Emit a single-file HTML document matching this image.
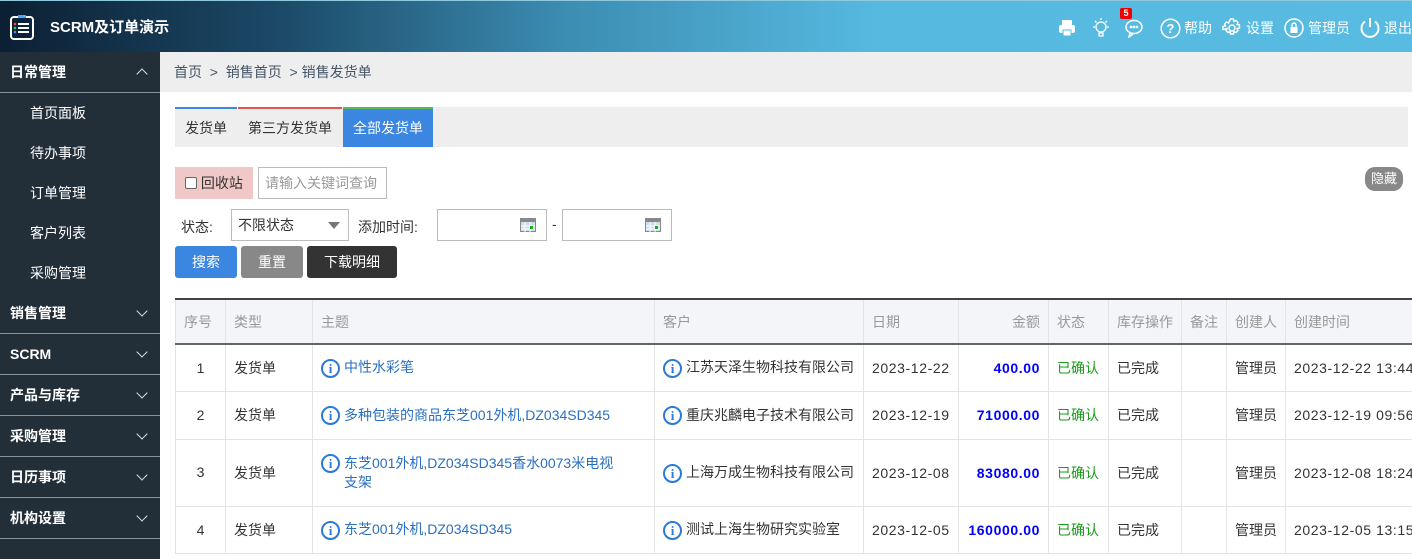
<!DOCTYPE html>
<html><head><meta charset="utf-8"><style>
*{box-sizing:border-box;margin:0;padding:0}
html,body{width:1412px;height:559px;overflow:hidden}
body{font-family:"Liberation Sans","Noto Sans CJK SC",sans-serif;font-size:14px;color:#333;background:#fff;position:relative}
.hd{position:absolute;left:0;top:0;width:1412px;height:52px;background:linear-gradient(90deg,#0c1f33 0%,#1c4a68 20%,#3c8db2 40%,#56b9e0 62%,#58bbe1 100%);border-top:1px solid #8fc9dd}
.hd .t{position:absolute;left:50px;top:15px;color:#fff;font-weight:bold;font-size:15px}
.hr{position:absolute;top:17px;color:#fff;font-size:14px}
.sb{position:absolute;left:0;top:52px;width:160px;height:507px;background:#232f38}
.sec{height:41px;border-bottom:1px solid #8a9399;color:#fff;font-weight:bold;font-size:14px;line-height:40px;padding-left:10px;position:relative}
.sec:after{content:"";position:absolute;right:14px;top:14px;width:7px;height:7px;border-right:1.5px solid #ddd;border-bottom:1.5px solid #ddd;transform:rotate(45deg)}
.sec.up:after{top:18px;transform:rotate(-135deg)}
.it{height:40px;line-height:40px;color:#fff;padding-left:30px;font-size:14px}
.bc{position:absolute;left:160px;top:52px;width:1252px;height:40px;background:#eee;color:#456;line-height:40px;padding-left:14px}
.tabs{position:absolute;left:175px;top:107px;width:1233px;height:40px;background:#eee}
.tab{position:absolute;top:0;height:40px;line-height:38px;text-align:center;border-top:2px solid}
.abs{position:absolute}
.btn{position:absolute;top:246px;height:32px;line-height:32px;color:#fff;text-align:center;border-radius:3px}
.wrap{position:absolute;left:0;top:0;width:1412px;height:559px;overflow:hidden}
table{position:absolute;left:175px;top:298px;border-collapse:collapse;table-layout:fixed;width:1250px;border-top:2px solid #444}
td,th{border:1px solid #e4e4e4;padding:0 8px;font-weight:normal;text-align:left;white-space:nowrap;overflow:hidden}
th{background:#f3f5f9;color:#999;height:45px;border-bottom:2px solid #666}
td{color:#333}
.n{letter-spacing:.6px}
.i{display:inline-block;width:19px;height:19px;border:2px solid #2a7ad8;border-radius:50%;color:#2a7ad8;font:bold 13px "Liberation Serif",serif;text-align:center;line-height:15px;vertical-align:middle;margin-right:4px}
.lk{color:#2a6fc0}
.am{text-align:right;color:#00f;font-weight:bold}
.ok{color:#1a9a1a}
</style></head><body><div class="wrap">
<div class="hd">
<svg class="abs" style="left:10px;top:13px" width="24" height="26" viewBox="0 0 24 26"><rect x="1" y="3" width="22" height="22" rx="3" fill="none" stroke="#fff" stroke-width="2"/><rect x="8" y="1" width="8" height="3" fill="#4af"/><circle cx="5" cy="10" r="1.3" fill="#f44"/><circle cx="5" cy="14" r="1.3" fill="#4c4"/><circle cx="5" cy="18" r="1.3" fill="#48f"/><path d="M8 10h11M8 14h11M8 18h11" stroke="#fff" stroke-width="2"/></svg>
<div class="t">SCRM及订单演示</div>
<svg class="abs" style="left:1058px;top:18px" width="18" height="18" viewBox="0 0 18 18"><rect x="4" y="1" width="10" height="5" fill="#fff"/><rect x="1" y="6" width="16" height="8" rx="2" fill="#fff"/><rect x="5" y="11" width="8" height="6" fill="#fff" stroke="#56b9e0"/></svg>
<svg class="abs" style="left:1091px;top:16px" width="20" height="22" viewBox="0 0 20 22" fill="none" stroke="#fff" stroke-width="1.3"><circle cx="10" cy="10" r="5"/><path d="M8 16h4v3h-4zM10 1v2M2 10h2M16 10h2M4 4l1.5 1.5M16 4l-1.5 1.5"/></svg>
<svg class="abs" style="left:1124px;top:17px" width="22" height="20" viewBox="0 0 22 20" fill="none" stroke="#fff" stroke-width="1.5"><ellipse cx="10" cy="9" rx="8" ry="6.5"/><path d="M6 15l-1 4 4-3"/><circle cx="7" cy="9" r=".6" fill="#fff"/><circle cx="10" cy="9" r=".6" fill="#fff"/><circle cx="13" cy="9" r=".6" fill="#fff"/></svg>
<div class="abs" style="left:1120px;top:7px;width:12px;height:11px;background:#e00;color:#fff;font-size:9px;font-weight:bold;text-align:center;line-height:11px;border-radius:2px">5</div>
<svg class="abs" style="left:1160px;top:17px" width="21" height="21" viewBox="0 0 21 21"><circle cx="10.5" cy="10.5" r="9.3" fill="none" stroke="#fff" stroke-width="1.5"/><text x="10.5" y="15" font-size="13" font-weight="bold" fill="#fff" text-anchor="middle" font-family="Liberation Sans">?</text></svg>
<div class="hr" style="left:1184px">帮助</div>
<svg class="abs" style="left:1222px;top:17px" width="20" height="20" viewBox="0 0 20 20" fill="none" stroke="#fff" stroke-width="1.4"><circle cx="10" cy="10" r="3"/><path d="M8.5 1h3l.5 2.5 2-1 2 2-1 2 2.5.5v3l-2.5.5 1 2-2 2-2-1-.5 2.5h-3l-.5-2.5-2 1-2-2 1-2L1 11.5v-3L3.5 8l-1-2 2-2 2 1z"/></svg>
<div class="hr" style="left:1246px">设置</div>
<svg class="abs" style="left:1284px;top:17px" width="20" height="20" viewBox="0 0 20 20"><circle cx="10" cy="10" r="9" fill="none" stroke="#fff" stroke-width="1.5"/><rect x="6.5" y="9" width="7" height="6" fill="#fff"/><path d="M8 9V7a2 2 0 014 0v2" fill="none" stroke="#fff" stroke-width="1.4"/></svg>
<div class="hr" style="left:1308px">管理员</div>
<svg class="abs" style="left:1359px;top:16px" width="22" height="22" viewBox="0 0 22 22" fill="none" stroke="#fff" stroke-width="2"><path d="M6 4.5A8.5 8.5 0 1016 4.5"/><path d="M11 1v9"/></svg>
<div class="hr" style="left:1384px">退出</div>
</div>
<div class="sb">
<div class="sec up">日常管理</div>
<div class="it">首页面板</div><div class="it">待办事项</div><div class="it">订单管理</div><div class="it">客户列表</div><div class="it">采购管理</div>
<div class="sec">销售管理</div><div class="sec">SCRM</div><div class="sec">产品与库存</div><div class="sec">采购管理</div><div class="sec">日历事项</div><div class="sec">机构设置</div>
</div>
<div class="bc">首页 &nbsp;&gt;&nbsp; 销售首页 &nbsp;&gt; 销售发货单</div>
<div class="tabs">
<div class="tab" style="left:0;width:62px;border-color:#3b86e0">发货单</div>
<div class="tab" style="left:63px;width:104px;border-color:#e0574f">第三方发货单</div>
<div class="tab" style="left:168px;width:90px;border-color:#5cb85c;background:#3b86e0;color:#fff">全部发货单</div>
</div>
<div class="abs" style="left:175px;top:167px;width:78px;height:32px;background:#f0c8c8;line-height:32px;padding-left:10px"><span style="display:inline-block;width:12px;height:12px;border:1px solid #666;border-radius:2px;background:#fff;vertical-align:-1px"></span> 回收站</div>
<div class="abs" style="left:258px;top:167px;width:129px;height:32px;border:1px solid #bbb;color:#999;line-height:30px;padding-left:6px">请输入关键词查询</div>
<div class="abs" style="left:1365px;top:167px;width:38px;height:24px;background:#888;color:#fff;border-radius:10px;text-align:center;line-height:24px;font-size:13px">隐藏</div>
<div class="abs" style="left:181px;top:217px">状态:</div>
<div class="abs" style="left:231px;top:209px;width:118px;height:32px;border:1px solid #bbb;line-height:30px;padding-left:6px">不限状态<span style="position:absolute;right:8px;top:12px;border:6px solid transparent;border-top:7px solid #777"></span></div>
<div class="abs" style="left:358px;top:217px">添加时间:</div>
<div class="abs" style="left:437px;top:209px;width:110px;height:32px;border:1px solid #bbb"><svg class="abs" style="right:10px;top:8px" width="16" height="14"><rect x=".5" y=".5" width="15" height="13" fill="#cde" stroke="#888"/><rect x="1" y="1" width="14" height="3" fill="#888"/><path d="M5 4v10M10 4v10M1 8h14M1 11h14" stroke="#fff"/><rect x="10" y="8" width="3" height="3" fill="#2a2"/></svg></div>
<div class="abs" style="left:552px;top:216px">-</div>
<div class="abs" style="left:562px;top:209px;width:110px;height:32px;border:1px solid #bbb"><svg class="abs" style="right:10px;top:8px" width="16" height="14"><rect x=".5" y=".5" width="15" height="13" fill="#cde" stroke="#888"/><rect x="1" y="1" width="14" height="3" fill="#888"/><path d="M5 4v10M10 4v10M1 8h14M1 11h14" stroke="#fff"/><rect x="10" y="8" width="3" height="3" fill="#2a2"/></svg></div>
<div class="btn" style="left:175px;width:62px;background:#3b86e0">搜索</div>
<div class="btn" style="left:241px;width:62px;background:#888">重置</div>
<div class="btn" style="left:307px;width:90px;background:#333">下载明细</div>
<table>
<colgroup><col style="width:50px"><col style="width:87px"><col style="width:342px"><col style="width:209px"><col style="width:95px"><col style="width:90px"><col style="width:60px"><col style="width:73px"><col style="width:45px"><col style="width:59px"><col style="width:140px"></colgroup>
<tr><th>序号</th><th>类型</th><th>主题</th><th>客户</th><th>日期</th><th style="text-align:right">金额</th><th>状态</th><th>库存操作</th><th>备注</th><th>创建人</th><th>创建时间</th></tr>
<tr style="height:47px"><td style="text-align:center">1</td><td>发货单</td><td><span class="i">i</span><span class="lk">中性水彩笔</span></td><td><span class="i">i</span>江苏天泽生物科技有限公司</td><td class="n">2023-12-22</td><td class="am n">400.00</td><td class="ok">已确认</td><td>已完成</td><td></td><td>管理员</td><td class="n">2023-12-22 13:44</td></tr>
<tr style="height:48px"><td style="text-align:center">2</td><td>发货单</td><td><span class="i">i</span><span class="lk">多种包装的商品东芝001外机,DZ034SD345</span></td><td><span class="i">i</span>重庆兆麟电子技术有限公司</td><td class="n">2023-12-19</td><td class="am n">71000.00</td><td class="ok">已确认</td><td>已完成</td><td></td><td>管理员</td><td class="n">2023-12-19 09:56</td></tr>
<tr style="height:67px"><td style="white-space:normal;line-height:19px;text-align:center">3</td><td>发货单</td><td style="white-space:normal;line-height:19px"><span class="i" style="vertical-align:top">i</span><span class="lk" style="display:inline-block;width:280px;vertical-align:top;white-space:normal;word-break:break-all">东芝001外机,DZ034SD345香水0073米电视支架</span></td><td><span class="i">i</span>上海万成生物科技有限公司</td><td class="n">2023-12-08</td><td class="am n">83080.00</td><td class="ok">已确认</td><td>已完成</td><td></td><td>管理员</td><td class="n">2023-12-08 18:24</td></tr>
<tr style="height:47px"><td style="text-align:center">4</td><td>发货单</td><td><span class="i">i</span><span class="lk">东芝001外机,DZ034SD345</span></td><td><span class="i">i</span>测试上海生物研究实验室</td><td class="n">2023-12-05</td><td class="am n">160000.00</td><td class="ok">已确认</td><td>已完成</td><td></td><td>管理员</td><td class="n">2023-12-05 13:15</td></tr>
</table>
</div></body></html>
